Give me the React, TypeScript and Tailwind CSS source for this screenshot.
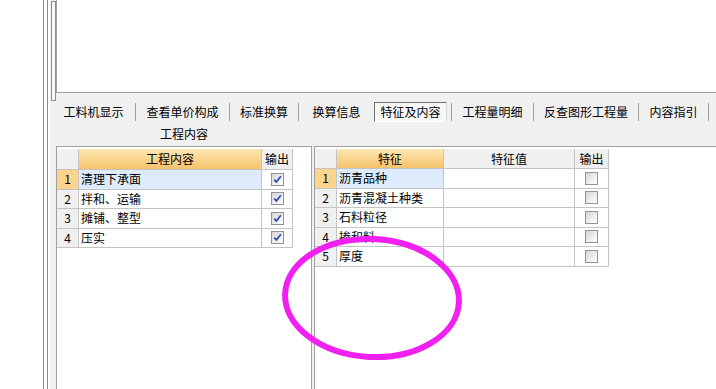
import React from 'react';

const tabs = [
  { label: '工料机显示', w: 'w-[83px]' },
  { label: '查看单价构成', w: 'w-[93px]' },
  { label: '标准换算', w: 'w-[68px]' },
  { label: '换算信息', w: 'w-[75px]', noSep: true },
];
const tabsRight = [
  { label: '工程量明细', w: 'w-[81px]' },
  { label: '反查图形工程量', w: 'w-[104px]' },
  { label: '内容指引', w: 'w-[69px]' },
];

const contentRows = ['清理下承面', '拌和、运输', '摊铺、整型', '压实'];
const featureRows = ['沥青品种', '沥青混凝土种类', '石料粒径', '掺和料', '厚度'];

function Sep() {
  return <div className="w-px h-[18px] bg-[#a0a0a0] shrink-0" />;
}

function CheckBox({ checked }: { checked: boolean }) {
  return (
    <div className="w-[13px] h-[13px] border border-[#8f949c] bg-gradient-to-br from-[#d6d6d6] to-white flex items-center justify-center">
      {checked && (
        <svg width="9" height="9" viewBox="0 0 9 9">
          <path d="M1.2 4.6 L3.4 6.9 L7.9 1.3" stroke="#2d4fb5" strokeWidth="1.7" fill="none" />
        </svg>
      )}
    </div>
  );
}

const cell = 'border-r border-b border-[#c4c4c4] flex items-center';
const goldHeader = 'bg-gradient-to-b from-[#fde6b0] to-[#f5c36b] justify-center';
const grayHeader = 'bg-[#f0f0f0] justify-center';

function ContentTable() {
  return (
    <div className="grid grid-cols-[22px_183px_31px] w-[236px]">
      <div className={`${cell} ${grayHeader} h-[21px]`} />
      <div className={`${cell} ${goldHeader} h-[21px]`}>工程内容</div>
      <div className={`${cell} ${grayHeader} h-[21px]`}>输出</div>
      {contentRows.map((r, i) => (
        <React.Fragment key={r}>
          <div className={`${cell} justify-center h-[19.5px] ${i === 0 ? 'bg-[#fcd48d]' : 'bg-[#f0f0f0]'}`}>{i + 1}</div>
          <div className={`${cell} pl-[2px] h-[19.5px] ${i === 0 ? 'bg-[#ddebfc]' : 'bg-white'}`}>{r}</div>
          <div className={`${cell} justify-center h-[19.5px] bg-white`}>
            <CheckBox checked />
          </div>
        </React.Fragment>
      ))}
    </div>
  );
}

function FeatureTable() {
  return (
    <div className="grid grid-cols-[22px_107px_131px_34px] w-[294px]">
      <div className={`${cell} ${grayHeader} h-[20px]`} />
      <div className={`${cell} ${goldHeader} h-[20px]`}>特征</div>
      <div className={`${cell} ${grayHeader} h-[20px]`}>特征值</div>
      <div className={`${cell} ${grayHeader} h-[20px]`}>输出</div>
      {featureRows.map((r, i) => (
        <React.Fragment key={r}>
          <div className={`${cell} justify-center h-[19.5px] ${i === 0 ? 'bg-[#fcd48d]' : 'bg-[#f0f0f0]'}`}>{i + 1}</div>
          <div className={`${cell} pl-[2px] h-[19.5px] ${i === 0 ? 'bg-[#ddebfc]' : 'bg-white'}`}>{r}</div>
          <div className={`${cell} h-[19.5px] bg-white`} />
          <div className={`${cell} justify-center h-[19.5px] bg-white`}>
            <CheckBox checked={false} />
          </div>
        </React.Fragment>
      ))}
    </div>
  );
}

export default function App() {
  return (
    <div className="relative w-[716px] h-[389px] overflow-hidden bg-white flex text-[12px] leading-none text-black font-['Noto_Sans_CJK_SC','Liberation_Sans',sans-serif]">
      {/* left margin + double splitter line */}
      <div className="w-[43px] shrink-0 bg-white" />
      <div className="w-px shrink-0 bg-[#8a8a8a]" />
      <div className="w-[3px] shrink-0 bg-white" />
      <div className="w-px shrink-0 bg-[#8a8a8a]" />
      <div className="w-[2px] shrink-0 bg-white" />

      <div className="flex-1 flex flex-col bg-[#f0f0f0]">
        {/* top blank pane */}
        <div className="flex h-[93px] shrink-0">
          <div className="w-[6px] shrink-0 pt-px pl-px">
            <div className="relative z-10 h-[100px] w-[5px] border border-[#8c8c8c] bg-[#f8f8f8]" />
          </div>
          <div className="flex-1 bg-white border-l border-b border-[#a0a0a0]" />
        </div>

        {/* tabs */}
        <div className="h-[53px] shrink-0 pt-[9px] pl-[2px]">
          <div className="flex items-center h-[20px]">
            {tabs.map((t) => (
              <React.Fragment key={t.label}>
                <div className={`${t.w} h-[20px] shrink-0 flex items-center justify-center`}>{t.label}</div>
                {!t.noSep && <Sep />}
              </React.Fragment>
            ))}
            <div className="w-[73px] h-[20px] shrink-0 flex items-center justify-center border border-t-[#707070] border-l-[#707070] border-r-[#d8d8d8] border-b-white bg-[#f8f8f8]">
              特征及内容
            </div>
            <div className="w-[4px] shrink-0" />
            <Sep />
            {tabsRight.map((t) => (
              <React.Fragment key={t.label}>
                <div className={`${t.w} h-[20px] shrink-0 flex items-center justify-center`}>{t.label}</div>
                <Sep />
              </React.Fragment>
            ))}
          </div>
          <div className="pl-[4px] w-[260px] h-[24px] flex items-center justify-center">工程内容</div>
        </div>

        {/* panels */}
        <div className="flex-1 flex">
          <div className="w-[6px] shrink-0" />
          <div className="w-[256px] shrink-0 bg-white border-l border-t border-r border-[#a0a0a0] pt-[2px]">
            <ContentTable />
          </div>
          <div className="w-[2px] shrink-0" />
          <div className="flex-1 bg-white border-l border-t border-[#a0a0a0] pt-[2px]">
            <FeatureTable />
          </div>
        </div>
      </div>

      {/* hand-drawn highlight */}
      <svg className="absolute left-0 top-0 pointer-events-none" width="716" height="389">
        <ellipse cx="372" cy="298" rx="87" ry="59" fill="none" stroke="#f020f0" strokeWidth="6" transform="rotate(3 372 298)" />
      </svg>
    </div>
  );
}
